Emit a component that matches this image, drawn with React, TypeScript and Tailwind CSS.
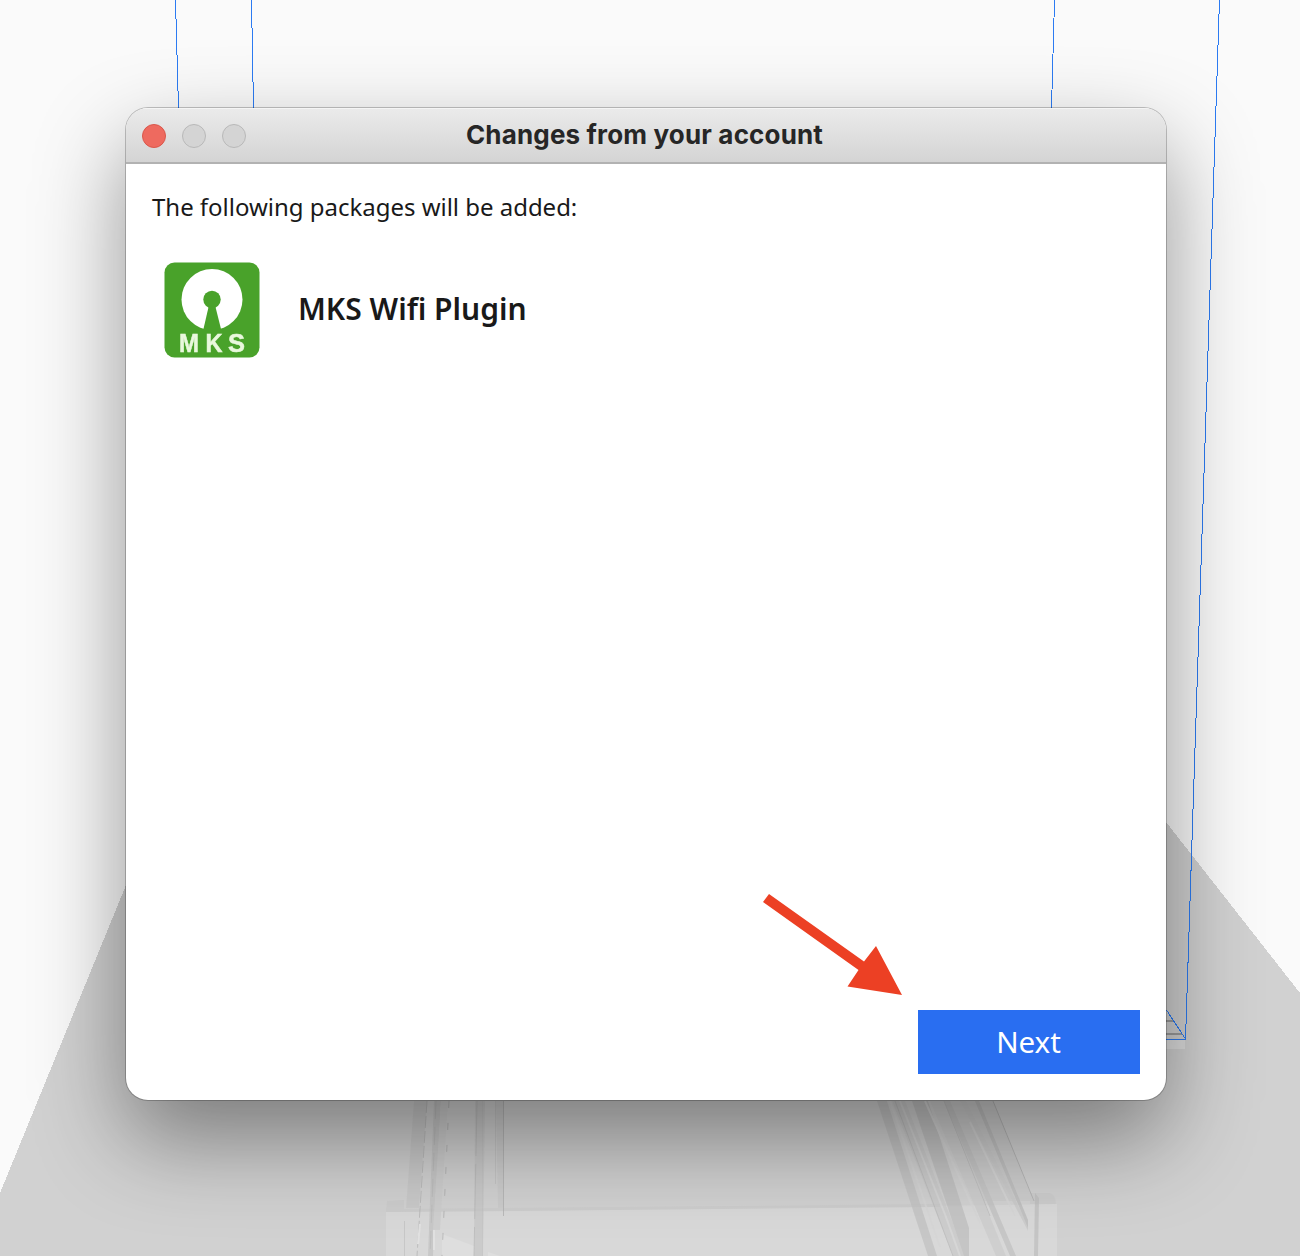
function Scene() {
  return (
    <svg className="absolute inset-0 h-full w-full" viewBox="0 0 1300 1256" aria-hidden="true">
      <rect width="1300" height="1256" fill="#fafafa" />
      {/* build-plate floor */}
      <path d="M126 885 L400 230 H690 L1166 822 L1300 993 V1256 H0 V1193 Z" fill="#d1d1d1" shapeRendering="crispEdges" />
      {/* translucent printer body */}
      <path d="M386 1211 L500 1210 L940 1206 L1057 1204 V1256 H386 Z" fill="#d8d8d8" />
      <path d="M387 1201 L404 1200 V1209 L940 1204 V1207 L386 1212 Z" fill="#cccccc" />
      <path d="M1030 1193 H1050 Q1056 1196 1056 1204 H1030 Z" fill="#cccccc" />
      <path d="M442 1234 L474 1246 V1256 H442 Z M488 1252 L500 1256 H488 Z" fill="#dedede" />
      <g opacity="0.7">
        <path d="M414 1101 H427 L419 1208 H406 Z" fill="#c7c7c7" />
        <path d="M434 1101 H441 L433 1256 H428 L430 1200 Z" fill="#c2c2c2" />
        <path d="M475 1101 H485 L483 1256 H474 Z" fill="#c6c6c6" />
        <path d="M496 1101 H504 V1208 H498 Z" fill="#c9c9c9" />
        <path d="M441 1101 H448 L440 1230 H433 Z" fill="#cccccc" />
        <g fill="none" strokeWidth="1">
          <path d="M427 1101 L417 1256" stroke="#b1b1b1" strokeDasharray="12 3" />
          <path d="M477 1101 L474 1256" stroke="#b5b5b5" strokeDasharray="55 8" />
          <path d="M449 1101 L442 1256" stroke="#aaa" strokeDasharray="7 15" />
          <path d="M503.500 1101 V1216" stroke="#adadad" />
          <path d="M436 1101 L430 1256" stroke="#b5b5b5" strokeDasharray="18 8" />
          <path d="M404.500 1221 V1256 M482.500 1101 V1256 M495.500 1101 V1184" stroke="#c0c0c0" />
        </g>
        <path d="M420 1224 L418 1244 M434 1230 V1250" stroke="#e6e6e6" strokeWidth="2" />
        <path d="M877 1101 H887 L937 1256 H928 Z" fill="#c1c1c1" />
        <path d="M892 1101 H905 L966 1256 H953 Z" fill="#c9c9c9" />
        <path d="M912 1101 H928 L969 1228 V1256 H964 Z" fill="#bdbdbd" />
        <path d="M930 1101 H943 L1006 1256 H996 Z" fill="#cccccc" />
        <path d="M943 1101 H993 L1034 1201 H984 Z" fill="#cbcbcb" />
        <path d="M944 1101 H950 L1016 1256 H1010 Z" fill="#c0c0c0" />
        <path d="M960 1101 H966 L1028 1225 V1231 Z" fill="#c8c8c8" />
        <path d="M975 1101 H979 L1028 1220 V1228 Z" fill="#b9b9b9" />
        <path d="M900 1101 L946 1217 L960 1256 M970 1122 L1015 1216 M925 1101 L980 1223 M890 1101 L940 1247" fill="none" stroke="#d6d6d6" strokeWidth="2" />
        <path d="M993 1101 L1034 1201" fill="none" stroke="#aaaaaa" strokeWidth="1" />
        <path d="M895 1101 L953 1256 M944 1101 L990 1216" fill="none" stroke="#b8b8b8" strokeWidth="1" />
        <path d="M1035 1193 L1039 1198 L1038 1256 H1034 Z" fill="#bdbdbd" />
      </g>
      {/* build volume outline */}
      <path d="M1166 1040 H1185 V1049 H1166 Z" fill="#dedede" />
      <path d="M1166 1021 H1173 M1166 1034 H1182" stroke="#9c9c9c" strokeWidth="2" />
      <g fill="none" stroke="#2c7bf2" strokeWidth="1" shapeRendering="crispEdges">
        <path d="M175.500 0 L178.500 108" />
        <path d="M251.500 0 L253.500 108" />
        <path d="M1054.500 0 L1051.500 108" />
        <path d="M1219.500 0 L1185.500 1039.500 H1166" />
        <path d="M1166.500 1010 L1185.500 1039" />
      </g>
    </svg>
  );
}

function MksLogo() {
  return (
    <svg className="block h-[96px] w-[96px] overflow-visible" viewBox="0 0 96 96" role="img" aria-label="MKS">
      <defs>
        <filter id="soften" x="-10%" y="-10%" width="120%" height="120%">
          <feGaussianBlur stdDeviation="0.7" />
        </filter>
      </defs>
      <g filter="url(#soften)">
        <rect x="0.500" y="0.500" width="95" height="95" rx="10" fill="#49a22b" />
        <circle cx="48" cy="37.500" r="30.500" fill="#fff" />
        <circle cx="48" cy="37.500" r="8.700" fill="#49a22b" />
        <path d="M45 43 H51 L57.500 69 H39 Z" fill="#49a22b" />
        <g fill="#e9f8dd" stroke="#e9f8dd" strokeWidth="0.5" fontFamily="Liberation Sans, sans-serif" fontWeight="700" fontSize="25">
          <text x="15" y="90" textLength="20" lengthAdjust="spacingAndGlyphs">M</text>
          <text x="41.500" y="90" textLength="17" lengthAdjust="spacingAndGlyphs">K</text>
          <text x="64" y="90" textLength="17" lengthAdjust="spacingAndGlyphs">S</text>
        </g>
      </g>
    </svg>
  );
}

function TitleBar() {
  return (
    <header className="relative flex h-14 shrink-0 items-center border-b-2 border-[#b2b2b2] bg-linear-to-b from-[#ebebeb] to-[#d4d4d4] px-4 shadow-[inset_0_1px_0_#f5f5f5]">
      <div className="flex gap-4 pt-px">
        <span className="size-6 rounded-full border border-[#d9574b] bg-[#ee6a5f]" />
        <span className="size-6 rounded-full border border-[#b8b8b8] bg-[#d4d4d4]" />
        <span className="size-6 rounded-full border border-[#b8b8b8] bg-[#d4d4d4]" />
      </div>
      <h1 className="absolute inset-x-0 top-0 pr-[3px] text-center font-[Inter,sans-serif] text-[26px] leading-[54px] font-bold tracking-[0.16px] text-[#262626]">
        Changes from your account
      </h1>
    </header>
  );
}

export default function App() {
  return (
    <main className="relative h-[1256px] w-[1300px] overflow-hidden px-[126px] pt-[108px] font-['Noto_Sans',sans-serif] text-[#191919]">
      <Scene />
      <section className="relative flex h-[992px] w-[1040px] flex-col rounded-[22px] bg-white shadow-[0_0_0_1px_rgba(0,0,0,0.22),0_38px_90px_rgba(0,0,0,0.42)]">
        <div className="overflow-hidden rounded-t-[22px]">
          <TitleBar />
        </div>
        <div className="flex flex-1 flex-col p-[26px]">
          <p className="text-[24px] leading-[34px] tracking-[-0.02px]">The following packages will be added:</p>
          <div className="mt-[38px] flex items-center gap-[38px] pl-3">
            <MksLogo />
            <span className="pb-[2px] text-[30px] leading-[40px] font-semibold">MKS Wifi Plugin</span>
          </div>
          <button className="mt-auto h-16 w-[222px] self-end bg-[#296ef1] pr-px text-[29.500px] text-white">Next</button>
        </div>
        <svg className="absolute top-[785px] left-[636px] h-[104px] w-[142px]" viewBox="0 0 142 104" aria-hidden="true">
          <path d="M7 1 L102 68.500 L114 53 L140 102 L85.500 93.500 L96.500 77 L1 9 Z" fill="#ec4024" />
        </svg>
      </section>
    </main>
  );
}
